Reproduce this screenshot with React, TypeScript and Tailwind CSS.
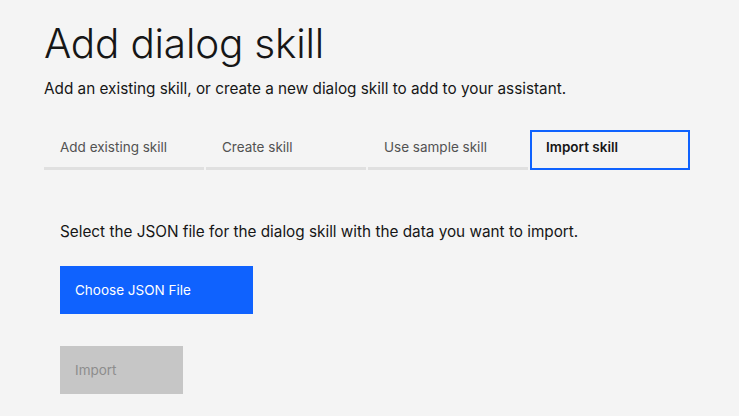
const tabs = ["Add existing skill", "Create skill", "Use sample skill", "Import skill"];

export default function App() {
  const active = 3;
  return (
    <div className="min-h-[416px] w-[739px] bg-[#f4f4f4] pl-[44px] pt-[18px] font-['Inter',sans-serif] text-[#161616]">
      <h1 className="text-[40.5px] font-light leading-[52px] tracking-[-0.2px]">Add dialog skill</h1>
      <p className="mt-[8px] text-[15.3px] leading-[22px]">
        Add an existing skill, or create a new dialog skill to add to your assistant.
      </p>

      {/* Tabs */}
      <div className="mt-[30px] flex gap-[2px]">
        {tabs.map((t, i) =>
          i === active ? (
            <div
              key={t}
              className="flex h-[40px] w-[160px] items-center border-2 border-[#0f62fe] px-[14px] pb-[5px] text-[13.5px] font-semibold text-[#161616]"
            >
              {t}
            </div>
          ) : (
            <div
              key={t}
              className="flex h-[40px] w-[160px] items-center border-b-[3px] border-[#e0e0e0] px-[16px] pb-[3px] text-[13.5px] text-[#525252]"
            >
              {t}
            </div>
          )
        )}
      </div>

      {/* Import panel */}
      <div className="pl-[16px] pt-[51px]">
        <p className="text-[15.3px] leading-[22px]">
          Select the JSON file for the dialog skill with the data you want to import.
        </p>
        <button className="mt-[23px] flex h-[48px] w-[193px] items-center bg-[#0f62fe] px-[15px] text-[13.5px] text-white">
          Choose JSON File
        </button>
        <button className="mt-[32px] flex h-[48px] w-[123px] items-center bg-[#c6c6c6] px-[15px] text-[13.5px] text-[#8d8d8d]">
          Import
        </button>
      </div>
    </div>
  );
}
